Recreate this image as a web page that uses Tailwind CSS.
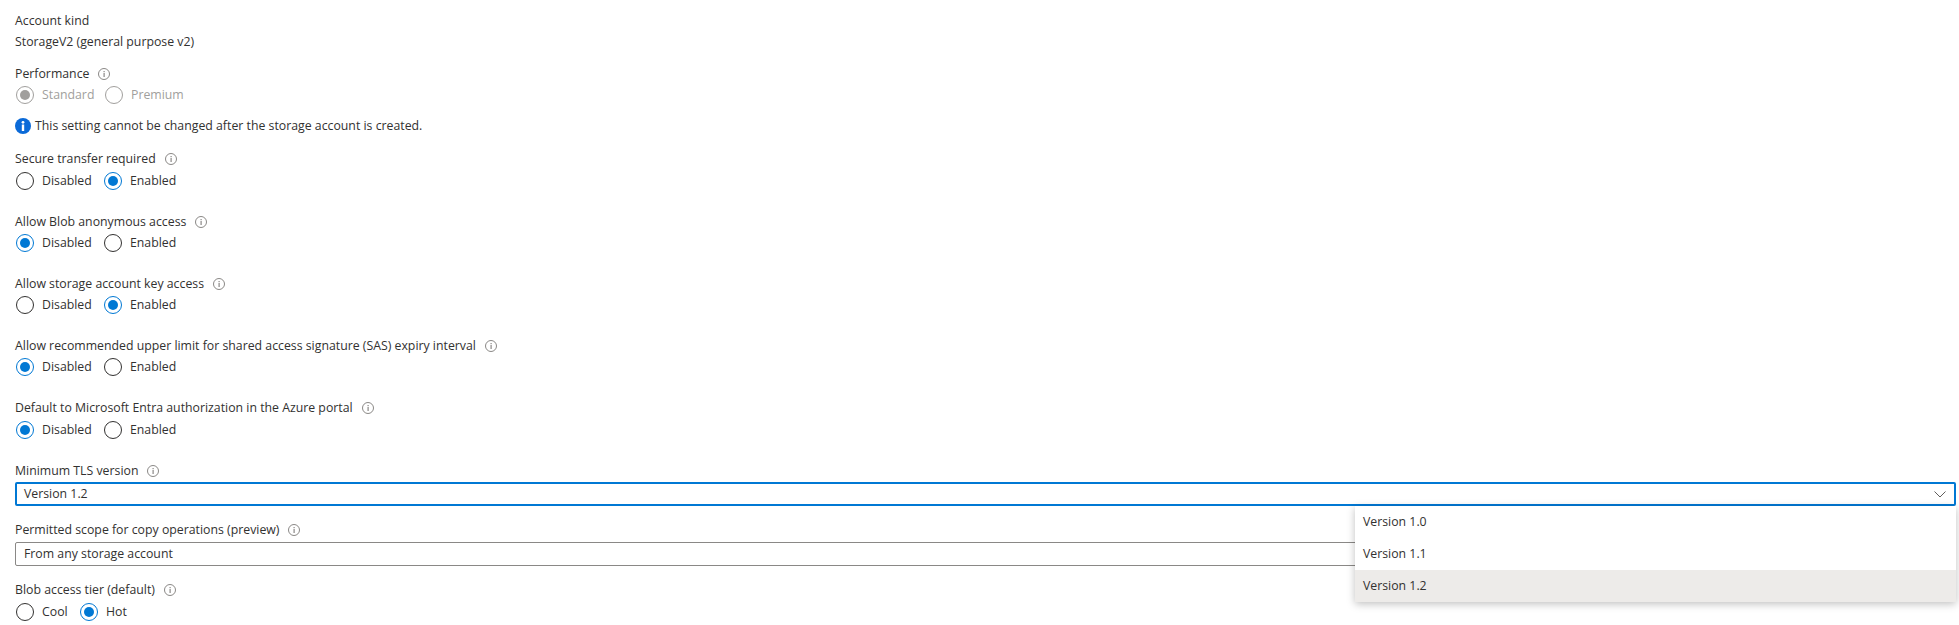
<!DOCTYPE html>
<html lang="en">
  <head>
    <meta charset="UTF-8" />
    <title>Advanced settings</title>
    <script src="https://cdn.jsdelivr.net/npm/@tailwindcss/browser@4"></script>
  </head>
  <body class="bg-white">
    <svg class="hidden">
      <symbol id="hint" viewBox="0 0 12 12">
        <circle cx="6" cy="6" r="5.5" fill="none" stroke="#8a8886" stroke-width="1" />
        <rect x="5.5" y="5" width="1.2" height="4" fill="#8a8886" />
        <rect x="5.5" y="3" width="1.2" height="1.2" fill="#8a8886" />
      </symbol>
    </svg>
    <div class="h-[625px] overflow-hidden pt-[10px] pl-[15px] pr-[3px] font-['Open_Sans',sans-serif] text-[12.3px] text-[#323130]">
      <div class="flex h-[22px] items-center">Account kind</div>
      <div class="flex h-[21px] items-center">StorageV2 (general purpose v2)</div>

      <div class="mt-[10px] flex h-[22px] items-center gap-[9px]">Performance <svg class="h-3 w-3"><use href="#hint" /></svg></div>
      <div class="-mt-[1px] flex h-[22px] items-center pl-px text-[#a19f9d]">
        <span class="flex h-[18px] w-[18px] items-center justify-center rounded-full border border-[#a19f9d]"><span class="h-[10px] w-[10px] rounded-full bg-[#a19f9d]"></span></span>
        <span class="ml-[8px] w-[63px]">Standard</span>
        <span class="h-[18px] w-[18px] rounded-full border border-[#a19f9d]"></span>
        <span class="ml-[8px]">Premium</span>
      </div>
      <div class="mt-[9px] flex h-[22px] items-center gap-[4px]">
        <svg class="h-4 w-4" viewBox="0 0 16 16"><circle cx="8" cy="8" r="8" fill="#0b6ad8" /><rect x="6.8" y="6.5" width="2.4" height="6.5" fill="#fff" /><circle cx="8" cy="4.3" r="1.4" fill="#fff" /></svg>
        <span>This setting cannot be changed after the storage account is created.</span>
      </div>

      <div class="mt-[11px] flex h-[22px] items-center gap-[9px]">Secure transfer required <svg class="h-3 w-3"><use href="#hint" /></svg></div>
      <div class="flex h-[22px] items-center pl-px">
        <span class="h-[18px] w-[18px] rounded-full border border-[#323130]"></span>
        <span class="ml-[8px] w-[62px]">Disabled</span>
        <span class="flex h-[18px] w-[18px] items-center justify-center rounded-full border border-[#0078d4]"><span class="h-[10px] w-[10px] rounded-full bg-[#0078d4]"></span></span>
        <span class="ml-[8px]">Enabled</span>
      </div>

      <div class="mt-[19px] flex h-[22px] items-center gap-[9px]">Allow Blob anonymous access <svg class="h-3 w-3"><use href="#hint" /></svg></div>
      <div class="-mt-[1px] flex h-[22px] items-center pl-px">
        <span class="flex h-[18px] w-[18px] items-center justify-center rounded-full border border-[#0078d4]"><span class="h-[10px] w-[10px] rounded-full bg-[#0078d4]"></span></span>
        <span class="ml-[8px] w-[62px]">Disabled</span>
        <span class="h-[18px] w-[18px] rounded-full border border-[#323130]"></span>
        <span class="ml-[8px]">Enabled</span>
      </div>

      <div class="mt-[19px] flex h-[22px] items-center gap-[9px]">Allow storage account key access <svg class="h-3 w-3"><use href="#hint" /></svg></div>
      <div class="-mt-[1px] flex h-[22px] items-center pl-px">
        <span class="h-[18px] w-[18px] rounded-full border border-[#323130]"></span>
        <span class="ml-[8px] w-[62px]">Disabled</span>
        <span class="flex h-[18px] w-[18px] items-center justify-center rounded-full border border-[#0078d4]"><span class="h-[10px] w-[10px] rounded-full bg-[#0078d4]"></span></span>
        <span class="ml-[8px]">Enabled</span>
      </div>

      <div class="mt-[19px] flex h-[22px] items-center gap-[9px]">Allow recommended upper limit for shared access signature (SAS) expiry interval <svg class="h-3 w-3"><use href="#hint" /></svg></div>
      <div class="-mt-[1px] flex h-[22px] items-center pl-px">
        <span class="flex h-[18px] w-[18px] items-center justify-center rounded-full border border-[#0078d4]"><span class="h-[10px] w-[10px] rounded-full bg-[#0078d4]"></span></span>
        <span class="ml-[8px] w-[62px]">Disabled</span>
        <span class="h-[18px] w-[18px] rounded-full border border-[#323130]"></span>
        <span class="ml-[8px]">Enabled</span>
      </div>

      <div class="mt-[19px] flex h-[22px] items-center gap-[9px]">Default to Microsoft Entra authorization in the Azure portal <svg class="h-3 w-3"><use href="#hint" /></svg></div>
      <div class="flex h-[22px] items-center pl-px">
        <span class="flex h-[18px] w-[18px] items-center justify-center rounded-full border border-[#0078d4]"><span class="h-[10px] w-[10px] rounded-full bg-[#0078d4]"></span></span>
        <span class="ml-[8px] w-[62px]">Disabled</span>
        <span class="h-[18px] w-[18px] rounded-full border border-[#323130]"></span>
        <span class="ml-[8px]">Enabled</span>
      </div>

      <div class="mt-[19px] flex h-[22px] items-center gap-[9px]">Minimum TLS version <svg class="h-3 w-3"><use href="#hint" /></svg></div>
      <div class="relative">
        <div class="flex h-[24px] items-center justify-between rounded-[2px] border-2 border-[#0078d4] pr-[8px] pl-[7px]">
          <span>Version 1.2</span>
          <svg class="h-3 w-3" viewBox="0 0 12 12"><path d="M0.5 3.5 L6 9 L11.5 3.5" fill="none" stroke="#605e5c" stroke-width="1" /></svg>
        </div>
        <div class="absolute top-full right-0 z-10 w-[601px] bg-white shadow-[0_2px_8px_rgba(0,0,0,0.25)]">
          <div class="flex h-[32px] items-center pl-[8px]">Version 1.0</div>
          <div class="flex h-[32px] items-center pl-[8px]">Version 1.1</div>
          <div class="flex h-[32px] items-center bg-[#edebe9] pl-[8px]">Version 1.2</div>
        </div>
      </div>

      <div class="mt-[13px] flex h-[22px] items-center gap-[9px]">Permitted scope for copy operations (preview) <svg class="h-3 w-3"><use href="#hint" /></svg></div>
      <div class="mt-[1px] flex h-[24px] items-center rounded-[2px] border border-[#8a8886] pl-[8px]">From any storage account</div>

      <div class="mt-[13px] flex h-[22px] items-center gap-[9px]">Blob access tier (default) <svg class="h-3 w-3"><use href="#hint" /></svg></div>
      <div class="flex h-[22px] items-center pl-px">
        <span class="h-[18px] w-[18px] rounded-full border border-[#323130]"></span>
        <span class="ml-[8px] w-[38px]">Cool</span>
        <span class="flex h-[18px] w-[18px] items-center justify-center rounded-full border border-[#0078d4]"><span class="h-[10px] w-[10px] rounded-full bg-[#0078d4]"></span></span>
        <span class="ml-[8px]">Hot</span>
      </div>
    </div>
  </body>
</html>
